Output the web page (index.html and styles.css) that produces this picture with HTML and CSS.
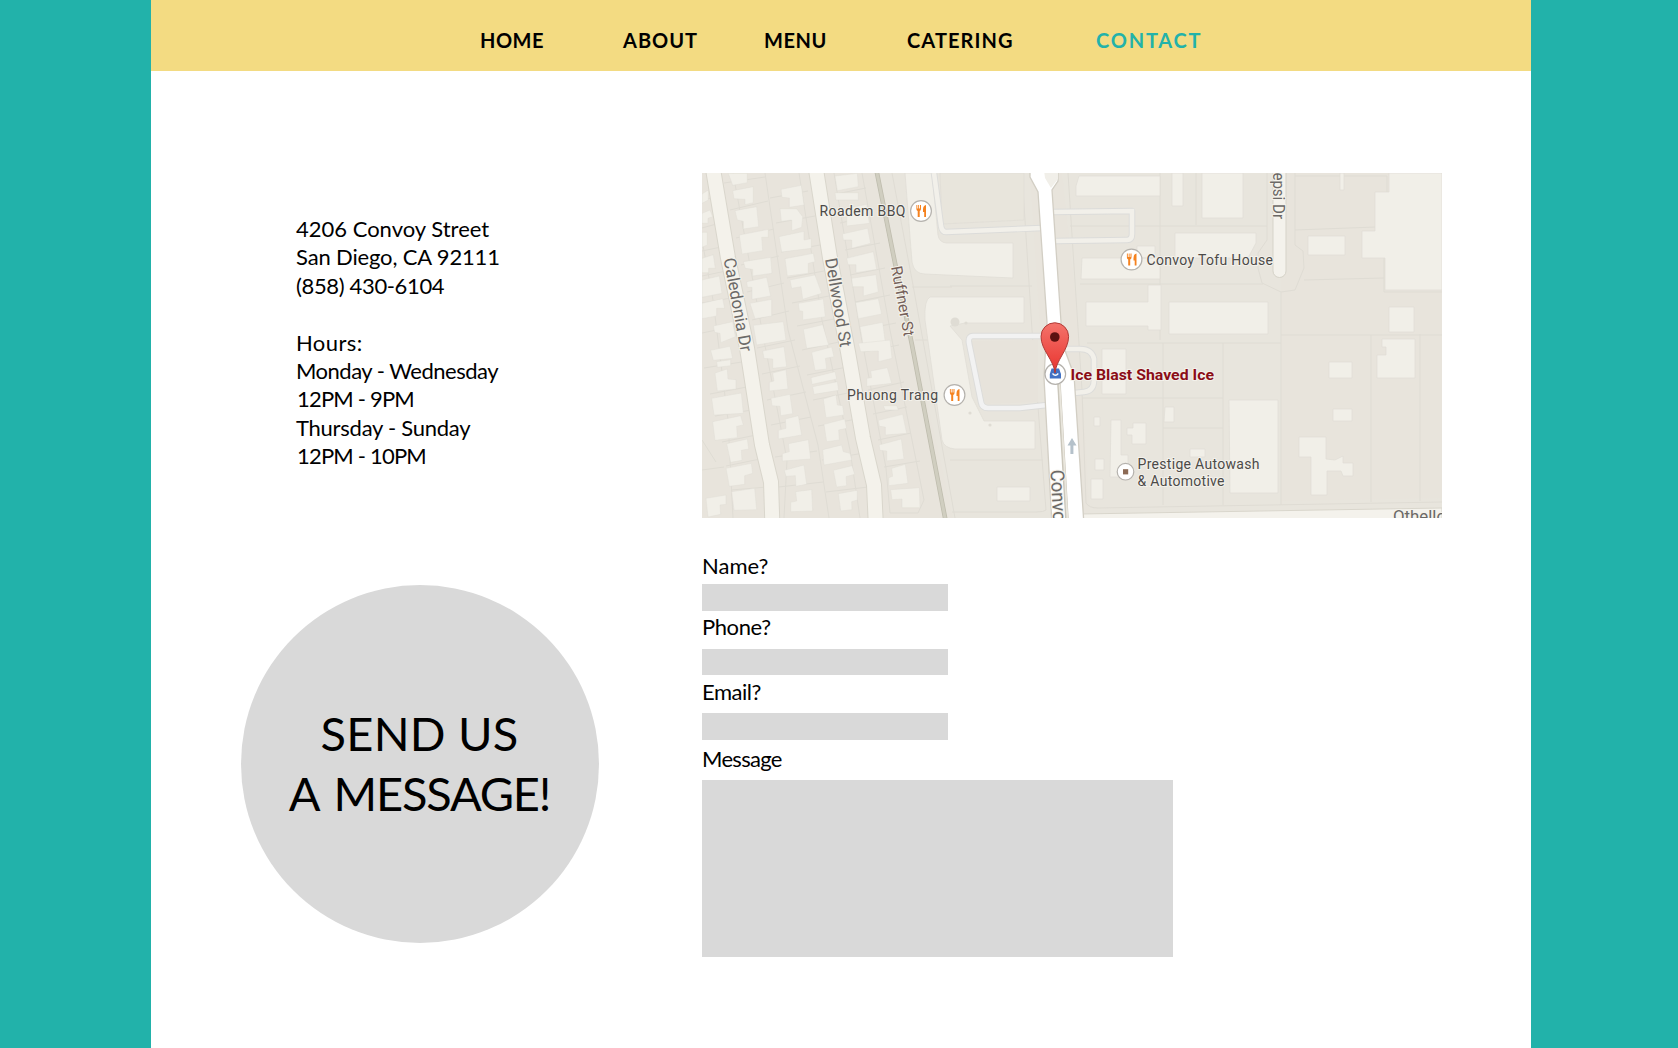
FILE: index.html
```html
<!DOCTYPE html>
<html lang="en">
<head>
<meta charset="utf-8">
<title>Ice Blast Shaved Ice - Contact</title>
<link rel="stylesheet" href="styles.css">
</head>
<body>
<div class="page">
  <nav class="nav">
    <a class="home">HOME</a>
    <a class="about">ABOUT</a>
    <a class="menu">MENU</a>
    <a class="catering">CATERING</a>
    <a class="contact">CONTACT</a>
  </nav>
  <main class="main">
    <section class="info">
      <address class="address">
        <div class="street">4206 Convoy Street</div>
        <div class="city">San Diego, CA 92111</div>
        <div class="phone">(858) 430-6104</div>
        <div class="hours">Hours:</div>
        <div class="weekdays">Monday - Wednesday</div>
        <div class="time">12PM - 9PM</div>
        <div class="weekend">Thursday - Sunday</div>
        <div class="time">12PM - 10PM</div>
      </address>
      <div class="send"><span class="send-top">SEND US</span><span class="send-bottom">A MESSAGE!</span></div>
    </section>
    <section class="reach">
      <svg class="map" viewBox="702 173 740 345" width="740" height="345">
        <defs>
          <g id="food">
            <circle r="10.4" fill="#fff" stroke="#b5b2ad" stroke-width="1.2"/>
            <path d="M-4.6-6v4q0 1.700 1.300 2V6h2V0Q0-.3 0-2v-4h-1v3.400h-.9V-6h-.9v3.400h-.9V-6zM5-6Q2-5.400 2-1.500V1h1.200V6H5z" fill="#f5821f"/>
          </g>
          <linearGradient id="pin" x2="0" y2="1"><stop stop-color="#f4736b"/><stop offset="1" stop-color="#e8332e"/></linearGradient>
        </defs>
        <rect x="702" y="173" width="740" height="345" fill="#e8e4dc"/>
        <path d="M875 173H1030L1052 518H953L905 300z M1062 173L1078 320L1090 518H1442V498L1281 501V173z" fill="#e8e5dd"/>

        <!-- parcel boundaries -->
        <g fill="none" stroke="#dfdcd4" stroke-width="1">
          <path d="M733 173L762 330L787 460L784 518M765 173L788 330L818 445L829 518M799 173L822 320L850 450L860 518M834 173L860 330L886 468L890 513H918L924 500L890 330L862 173M702 240L713 300L728 420L733 518M892 173L913 285L955 518M702 470L724 467M702 440L716 462"/>
          <path d="M724 183L765 177M730 210L768 201M736 238L774 229M741 265L779 256M747 292L784 283M752 320L789 311M757 348L795 340M762 374L800 366M767 400L806 392M771 425L811 417M775 457L817 451M779 487L823 482"/>
          <path d="M770 198L808 191M776 223L815 216M781 252L820 245M787 278L824 271M792 303L829 296M797 326L834 319M802 350L839 342M807 375L847 367M813 400L853 392M818 426L857 419M822 460L864 453M826 492L868 487"/>
          <path d="M836 194L866 188M840 223L873 216M845 250L880 243M850 275L885 268M855 302L890 295M860 330L896 323M864 352L899 345M868 390L904 382M873 414L907 407M878 440L911 433M884 467L920 461"/>
          <path d="M702 200L716 197M702 228L720 223M702 251L726 246M702 276L731 270M702 303L737 297M702 333L741 325M704 368L748 361M710 394L752 386M715 416L758 409M722 442L761 434M726 466L765 458M731 490L767 487"/>
          <path d="M1022 173L1032 330L1046 510Q1044 512 1036 512H952M1068 173L1082 390L1086 503Q1089 508 1098 508L1442 502M950 286H1032M1070 226H1267M1080 284H1263M1087 343H1281M1160 173V340M1196 173V225M1082 398H1223M1163 343V505M1163 428H1223M1223 343V505M950 460H1043M1267 173V240L1258 253V268L1262 283L1281 292L1295 290L1304 268L1303 251L1295 245V173M1281 292V505M1295 230L1376 227M1304 280L1384 278M1281 335H1442M1371 335V502M1384 258V292H1442M1420 334V501M1295 176H1387V192M912 287H952M915 340H950"/>
        </g>

        <!-- houses west of Ruffner St -->
        <g transform="translate(700 170) scale(.33333)" fill="#f1efe8" stroke="#dfdcd4" stroke-width="1.200">
          <path d="M85 10H142V38L98 46zM98 62L160 50V98L135 104V88L102 86zM105 122L170 110L176 170L130 177V154L112 150zM118 195L205 178V202H185L188 242L126 252zM130 275L212 262L216 310L158 318V298L136 295zM140 335L200 322L212 378L156 388V352H142zM150 400L215 388V438L165 446zM160 466L250 455L258 510L170 525z"/>
          <path d="M243 58L304 46L312 105L268 112V84L246 82zM240 116H290L308 140L305 172L275 182V150L244 154zM237 200L312 184V210L334 206V235L245 246zM255 266L340 250L345 275L325 280V310L262 318zM270 330L345 315L365 370L308 388L303 350L275 355zM295 400L370 387L376 440L308 450V424L298 422zM310 478L368 464L386 525L320 535z"/>
          <path d="M405 18L472 10L475 50L412 62zM405 68H475V90H408zM420 120L500 103L508 160L440 168V140L424 142zM427 192L503 175L512 220L455 235V210H430zM440 265L520 245L530 298L468 308V284H444zM455 325L528 314L535 366L490 378V350H458zM467 398L535 386L545 432L475 446zM480 470L548 457L556 518L490 528z"/>
          <path d="M6 72L25 60V90L6 100zM6 130L30 120L38 140L24 145V160H6zM6 187H22V225L6 232zM6 265L40 254L46 295H26V308H6zM6 330L58 318L66 370L6 382zM6 400L68 386L74 415H50V438L6 446zM40 468L98 455L106 500L62 518L60 490L44 487z"/>
        </g>
        <g transform="translate(700 345) scale(.33333)" fill="#f1efe8" stroke="#dfdcd4" stroke-width="1.200">
          <path d="M32 16L90 4L98 40L40 46zM50 50L92 44V62L52 67zM45 84L82 72L84 102L108 104V132L52 138zM35 160L124 144L130 205L42 210zM38 230L122 212L130 240L110 244L112 278L45 286zM80 296L142 282L146 312L124 316L126 346L92 352zM78 370L154 355L158 385L134 392V418L88 424zM95 440L164 430L170 494L102 496zM18 460L78 450V478L60 480L62 508L24 516z"/>
          <path d="M188 18L252 5L260 65L218 70V42L192 40zM218 84L258 74L264 132L208 138V112L222 108zM213 160L270 148L278 206L242 212L240 184L216 182zM256 222L295 212L305 270L235 282V256L258 250zM265 296L325 284L332 342L247 348V326L268 320zM253 376L312 360L320 418L288 424L286 392L258 394zM287 440L335 434L338 498L272 500V472L290 468z"/>
          <path d="M335 22L395 6L402 35L376 40L380 72L345 76zM333 98L405 80L410 102L336 118zM338 125L412 110L416 136L342 148zM370 162L408 150L412 180L428 182L432 210L378 218zM372 238L434 222L440 250L416 255L418 285L380 290zM368 314L425 300L430 320L450 325L455 345L372 360zM400 376L456 362L464 388L438 395L440 422L410 426zM415 446L472 436V465L455 470L456 494L422 498z"/>
          <path d="M475 -5L570 -15L576 40L535 50V18L482 20zM512 78L562 68L575 115L500 124V100L515 98zM550 182H590L595 195H555zM535 226L608 208L620 265L556 270V246L538 244zM537 300L604 282L612 342L560 348V318L540 316zM575 370L616 358L624 415L566 422V398L578 394zM572 434L658 428L660 488H606V462L576 464z"/>
        </g>

        <!-- larger buildings -->
        <g fill="#f1efe8" stroke="#e0ddd6" stroke-width=".7">
          <path d="M905 173H932L938 235Q939 242 946 243H1013V278L925 274Q914 274 912 262z"/>
          <path d="M930 297H1024V323H965L950 326L962 340L972 397L984 421H1035V449H955Q944 448 942 440L925 320Q924 300 930 297z"/>
          <path d="M940 173H1024V220L942 224z" fill="#e8e5dc"/>
          <path d="M970 341L1038 340V402L985 404z" fill="#e7e3db" stroke="none"/>
          <path d="M1079 176H1160V196H1076V186zM1172 173H1183V206H1172zM1202 173H1243V218H1202zM1175 233H1256V243L1248 258H1175zM1082 258H1160V279H1081zM1137 246H1155V258H1137zM1086 302H1148V285H1161V330H1148V326H1086zM1169 302H1268V334H1169z"/>
          <path d="M1340 173H1344V190H1340zM1308 236H1345V255H1308zM1389 173H1442V290H1385V258H1362V231H1375V192H1389zM1389 307H1414V332H1389zM1382 339H1415V378H1377V355H1386V347H1382zM1329 362H1352V378H1329zM1333 409H1352V421H1333zM1229 400H1278V493H1230z"/>
          <path d="M1102 349H1126V394H1102zM1165 407H1174V422H1164zM1094 417H1100V426H1094zM1111 420H1121V455H1128V477H1110zM1133 423H1146V444H1132V435H1127V428H1133zM1095 459H1104V470H1095zM1091 479H1103V499H1091zM997 487H1030V501H997zM1299 437H1326V459L1335 460L1343 456V463H1353V476H1343L1341 471H1327V495H1311V457H1299zM1190 449H1205V457H1190z"/>
        </g>
        <g fill="#dfdcd4"><circle cx="955" cy="322" r="4.500"/><circle cx="966" cy="323" r="1.600"/><circle cx="970" cy="413" r="1.600"/><circle cx="990" cy="425" r="1.600"/></g>

        <!-- service roads -->
        <path d="M1052 212L1132 211V234Q1132 240 1127 240L1055 241M1042 228L946 232Q942 232 941 226L934 173M1042 336H973Q968 336 969 343L981 402Q982 408 988 408H1020L1047 405M1065 349H1080Q1092 349 1094 359V380Q1094 391 1084 392L1074 393" fill="none" stroke="#dcdcda" stroke-width="6.500" stroke-linejoin="round"/>
        <path d="M1052 212L1132 211V234Q1132 240 1127 240L1055 241M1042 228L946 232Q942 232 941 226L934 173M1065 349H1080Q1092 349 1094 359V380Q1094 391 1084 392L1074 393" fill="none" stroke="#f2f0ea" stroke-width="4.600"/>
        <path d="M1042 336H973Q968 336 969 343L981 402Q982 408 988 408H1020L1047 405" fill="none" stroke="#f2f2f2" stroke-width="4.600"/>

        <!-- streets -->
        <path d="M712 163L728 258L747 348L762 445L771 482L772.500 528M815 163L830 258L848 352L863 438L874 485L876 528" fill="none" stroke="#d9d6cc" stroke-width="16"/>
        <path d="M712 163L728 258L747 348L762 445L771 482L772.500 528M815 163L830 258L848 352L863 438L874 485L876 528" fill="none" stroke="#f4f2eb" stroke-width="14"/>
        <path d="M875 163L895 263L912 345L947 528" fill="none" stroke="#bfbdae" stroke-width="4.600"/>
        <path d="M875 163L895 263L912 345L947 528" fill="none" stroke="#d0cec0" stroke-width="3"/>
        <path d="M1273 165V271a6.500 6.500 0 0 0 13 0V165z" fill="#f4f2ec" stroke="#d6d3c9"/>
        <path d="M1080 514L1442 508V530H1080z" fill="#f4f2ec" stroke="#d9d6cc"/>
        <path d="M1030 170V177L1038 192L1047 322L1044 378L1052 525H1084L1074 375L1063 345L1061 322L1052 190L1058 181V170z" fill="#fff" stroke="#d2cec4" stroke-width="1.300"/>
        <path d="M1044 170L1045 178L1051 188L1058 179V170z" fill="#f1efe9"/>
        <path d="M1059 384L1067 520" fill="none" stroke="#cbc7bb" stroke-width="3.600"/>
        <path d="M1059.500 384L1067.500 520" fill="none" stroke="#e9e6dd" stroke-width="1.800"/>
        <path d="M1072 438L1076.500 445.500H1073.400V454H1070.400V445.500H1067.500z" fill="#b5c1ca"/>

        <!-- street names -->
        <g class="street-name">
          <text transform="translate(723.500 259) rotate(79.500)" font-size="17" textLength="95" lengthAdjust="spacingAndGlyphs">Caledonia Dr</text>
          <text transform="translate(825 259) rotate(80.300)" font-size="17" textLength="90" lengthAdjust="spacingAndGlyphs">Dellwood St</text>
          <text class="ruffner" transform="translate(891 267) rotate(79.500)" font-size="15.500" textLength="71" lengthAdjust="spacingAndGlyphs">Ruffner St</text>
          <text transform="translate(1273 163) rotate(90)" font-size="17" textLength="56" lengthAdjust="spacingAndGlyphs">Pepsi Dr</text>
          <text transform="translate(1050.500 470) rotate(87)" font-size="19" textLength="114" lengthAdjust="spacingAndGlyphs">Convoy Street</text>
          <text x="1393" y="521.500" font-size="16.500" textLength="53" lengthAdjust="spacingAndGlyphs">Othello</text>
        </g>

        <!-- places -->
        <g class="place">
          <text x="819.500" y="216.300" textLength="86">Roadem BBQ</text>
          <text x="1146.500" y="265.300" textLength="126.500">Convoy Tofu House</text>
          <text x="847" y="400.300" textLength="91">Phuong Trang</text>
          <text x="1137.500" y="468.700" textLength="122">Prestige Autowash</text>
          <text x="1137.500" y="485.700" textLength="87">&amp; Automotive</text>
          <text class="here" x="1070.500" y="380" textLength="143.500" lengthAdjust="spacingAndGlyphs">Ice Blast Shaved Ice</text>
        </g>
        <use href="#food" x="921" y="211"/>
        <use href="#food" x="1131.500" y="259.500"/>
        <use href="#food" x="954.500" y="395"/>
        <circle cx="1125.500" cy="471.700" r="8.300" fill="#fff" stroke="#b5b2ad" stroke-width="1.200"/>
        <rect x="1123" y="469.200" width="5.200" height="5.200" fill="#8c6a55"/>
        <circle cx="1055.300" cy="374" r="10.300" fill="#fff" stroke="#b5b2ad" stroke-width="1.200"/>
        <path d="M1051.500 368.500H1059L1061 374V378.500H1049.800V374z" fill="#4272c4"/>
        <path d="M1052.500 373.500Q1055.400 377 1058.300 373.500" fill="none" stroke="#fff" stroke-width="1.300"/>
        <path d="M1055 373C1054 360 1041 350 1041 336.500A13.800 13.800 0 0 1 1068.600 336.500C1068.600 350 1056 360 1055 373z" fill="url(#pin)" stroke="#b03a36" stroke-width="1"/>
        <circle cx="1054.800" cy="337" r="4.800" fill="#5c1210"/>
      </svg>
      <form class="form">
        <label class="name" for="name">Name?</label>
        <input class="field" id="name">
        <label class="tel" for="tel">Phone?</label>
        <input class="field" id="tel">
        <label class="email" for="email">Email?</label>
        <input class="field" id="email">
        <label class="message" for="message">Message</label>
        <textarea class="field" id="message"></textarea>
      </form>
    </section>
  </main>
</div>
</body>
</html>
```
FILE: styles.css
```css
* { box-sizing: border-box; }
body {
  margin: 0;
  background: #22b2aa;
  color: #000;
  font-family: "Gill Sans", Lato, sans-serif;
}
.page {
  width: 1380px;
  height: 1048px;
  margin-left: 151px;
  background: #fff;
  overflow: hidden;
}
.nav {
  display: grid;
  grid-template-columns: 143px 141px 143px 189px auto;
  height: 71px;
  padding: 28px 0 0 329px;
  background: #f3db82;
  font-size: 20px;
  font-weight: 700;
  line-height: 25px;
}
.home { letter-spacing: .5px; }
.about { letter-spacing: 1px; }
.menu { letter-spacing: .6px; }
.catering { letter-spacing: 1.1px; }
.contact { letter-spacing: 1.8px; color: #22b2aa; }

.main {
  display: grid;
  grid-template-columns: 462px 740px;
  padding: 102px 0 0 89px;
}
.address {
  height: 412px;
  padding: 42px 0 0 56px;
  font-size: 22px;
  font-style: normal;
  line-height: 28.400px;
  white-space: nowrap;
}
.street { letter-spacing: 0; }
.city { letter-spacing: -.15px; }
.phone { letter-spacing: -.35px; }
.hours { margin-top: 28.400px; letter-spacing: .4px; }
.weekdays { letter-spacing: -.5px; }
.time { padding-left: 1px; letter-spacing: -.8px; }
.weekend { letter-spacing: -.25px; }

.send {
  display: flex;
  flex-direction: column;
  align-items: center;
  width: 358px;
  height: 358px;
  margin-left: .5px;
  padding-top: 118px;
  border-radius: 50%;
  background: #d9d9d9;
  font-size: 47px;
  line-height: 60px;
}
.send-top { letter-spacing: .2px; }
.send-bottom { letter-spacing: -1.200px; word-spacing: 5px; }

.map { display: block; }
.street-name {
  font-family: Roboto, sans-serif;
  fill: #6b6967;
  stroke: #f4f2eb;
  stroke-width: 2px;
  paint-order: stroke;
}
.ruffner { fill: #75605a; }
.place {
  font: 14px Roboto, sans-serif;
  fill: #4c4a48;
  stroke: #f3f1eb;
  stroke-width: 2px;
  paint-order: stroke;
}
.here { font-size: 15px; font-weight: 700; fill: #8b0d17; }

.form {
  display: flex;
  flex-direction: column;
  align-items: flex-start;
  padding-top: 34px;
  font-size: 22px;
  line-height: 28px;
}
.field {
  display: block;
  width: 246px;
  height: 27px;
  margin: 0;
  padding: 0 6px;
  border: 0;
  outline: 0;
  background: #d9d9d9;
  font: inherit;
  resize: none;
}
.name { margin-bottom: 4px; }
.tel { margin-top: 2px; margin-bottom: 8px; letter-spacing: -.4px; }
#tel { height: 26px; }
.email { margin-top: 3px; margin-bottom: 7px; letter-spacing: -.5px; }
.message { margin-top: 5px; margin-bottom: 7px; letter-spacing: -.7px; }
#message { width: 471px; height: 177px; }
```
